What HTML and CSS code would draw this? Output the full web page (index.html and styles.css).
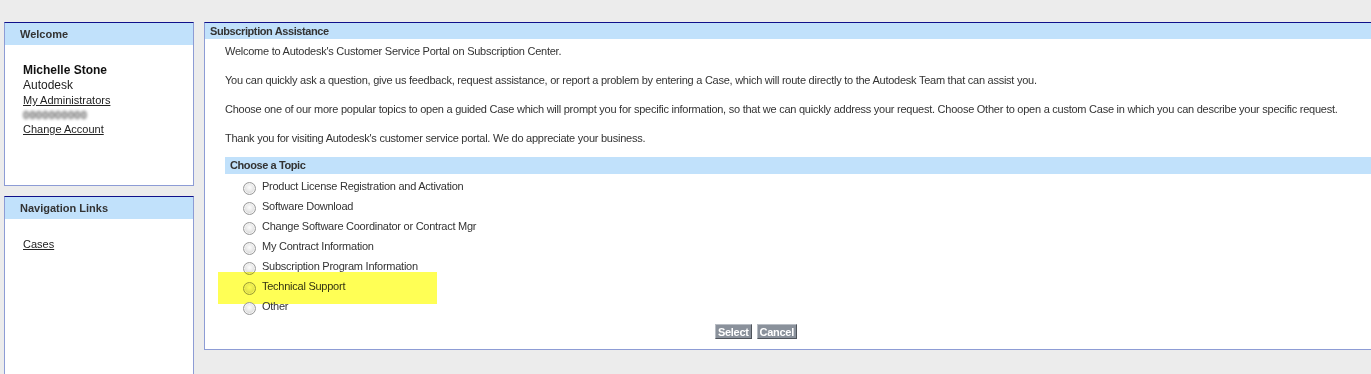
FILE: index.html
```html
<!DOCTYPE html>
<html lang="en">
<head>
    <meta charset="UTF-8">
    <meta name="viewport" content="width=device-width, initial-scale=1.0">
    <title>Subscription Center - Customer Service Portal</title>
    <link rel="stylesheet" href="styles.css">
</head>
<body>

    <div class="page">

        <!-- Columna izquierda -->
        <aside class="sidebar">
            <div class="box welcome-box">
                <div class="box-header">Welcome</div>
                <div class="box-body">
                    <div class="user-name">Michelle Stone</div>
                    <div class="user-company">Autodesk</div>
                    <a href="#" class="link">My Administrators</a>
                    <div class="blurred">0000000000</div>
                    <a href="#" class="link">Change Account</a>
                </div>
            </div>

            <div class="box nav-box">
                <div class="box-header">Navigation Links</div>
                <div class="box-body">
                    <a href="#" class="link">Cases</a>
                </div>
            </div>
        </aside>

        <!-- Panel principal -->
        <main class="panel">
            <div class="panel-header">Subscription Assistance</div>
            <div class="panel-body">
                <p>Welcome to Autodesk's Customer Service Portal on Subscription Center.</p>
                <p>You can quickly ask a question, give us feedback, request assistance, or report a problem by entering a Case, which will route directly to the Autodesk Team that can assist you.</p>
                <p>Choose one of our more popular topics to open a guided Case which will prompt you for specific information, so that we can quickly address your request. Choose Other to open a custom Case in which you can describe your specific request.</p>
                <p>Thank you for visiting Autodesk's customer service portal. We do appreciate your business.</p>

                <div class="section-bar">Choose a Topic</div>

                <form class="topics">
                    <label class="topic"><input type="radio" name="topic"><span class="radio"></span>Product License Registration and Activation</label>
                    <label class="topic"><input type="radio" name="topic"><span class="radio"></span>Software Download</label>
                    <label class="topic"><input type="radio" name="topic"><span class="radio"></span>Change Software Coordinator or Contract Mgr</label>
                    <label class="topic"><input type="radio" name="topic"><span class="radio"></span>My Contract Information</label>
                    <label class="topic"><input type="radio" name="topic"><span class="radio"></span>Subscription Program Information</label>
                    <label class="topic highlighted"><input type="radio" name="topic"><span class="radio"></span>Technical Support<span class="marker"></span></label>
                    <label class="topic"><input type="radio" name="topic"><span class="radio"></span>Other</label>

                    <div class="actions">
                        <button type="submit" class="btn">Select</button>
                        <button type="button" class="btn">Cancel</button>
                    </div>
                </form>
            </div>
        </main>

    </div>

</body>
</html>
```

FILE: styles.css
```css
:root {
    --fondo: #ececec;
    --azul-claro: #c1e1fb;
    --borde: #8d9cd5;
    --borde-oscuro: #10108a;
    --texto: #333;
}

body {
    font-family: "Liberation Sans", Arial, sans-serif;
    font-size: 11px;
    color: var(--texto);
    background-color: var(--fondo);
    margin: 0;
    padding: 0;
    overflow: hidden;
}

.page {
    display: flex;
    align-items: flex-start;
    gap: 10px;
    padding: 22px 0 0 4px;
}

/* Columna izquierda */
.sidebar {
    width: 190px;
    flex-shrink: 0;
    display: flex;
    flex-direction: column;
    gap: 10px;
}

.box {
    background-color: white;
    border: 1px solid var(--borde);
    border-top-color: var(--borde-oscuro);
}

.box-header {
    background-color: var(--azul-claro);
    height: 22px;
    line-height: 22px;
    padding-left: 15px;
    font-weight: bold;
    color: #333;
}

.box-body {
    padding: 18px 18px 0;
}

.welcome-box {
    height: 162px;
}

.nav-box {
    height: 200px;
}

.user-name {
    font-size: 12px;
    font-weight: bold;
    color: #111;
    line-height: 15px;
}

.user-company {
    font-size: 12px;
    line-height: 15px;
    color: #222;
}

.link {
    display: block;
    color: #222;
    text-decoration: underline;
    line-height: 15px;
}

.blurred {
    color: #555;
    font-weight: bold;
    line-height: 14px;
    letter-spacing: 0.3px;
    filter: blur(1.4px);
}

/* Panel principal */
.panel {
    flex: 1;
    background-color: white;
    border: 1px solid var(--borde);
    border-top-color: var(--borde-oscuro);
    border-right: none;
    letter-spacing: -0.25px;
}

.panel-header {
    background-color: var(--azul-claro);
    height: 16px;
    line-height: 16px;
    padding-left: 5px;
    font-weight: bold;
    color: #333;
    letter-spacing: -0.4px;
}

.panel-body {
    padding: 5px 0 10px 20px;
}

.panel-body p {
    margin: 0 0 15px;
    line-height: 14px;
    white-space: nowrap;
}

.panel-body p:last-of-type {
    margin-bottom: 12px;
}

.section-bar {
    background-color: var(--azul-claro);
    height: 17px;
    line-height: 17px;
    padding-left: 5px;
    font-weight: bold;
    color: #333;
    letter-spacing: -0.4px;
}

.topics {
    padding-top: 2px;
}

.topic {
    display: flex;
    align-items: center;
    height: 20px;
    padding-left: 18px;
    color: #333;
    position: relative;
    width: max-content;
}

.topic input {
    display: none;
}

.radio {
    width: 11px;
    height: 11px;
    border: 1px solid #9a9a9a;
    border-radius: 50%;
    background: radial-gradient(circle at 50% 40%, #fdfdfd 0%, #e8e8e8 45%, #c4c4c4 100%);
    margin: 5px 6px 0 0;
    box-shadow: inset 0 0 0 1px #f4f4f4;
}

/* Resaltado amarillo sobre Technical Support */
.marker {
    position: absolute;
    left: -7px;
    top: -4px;
    width: 219px;
    height: 32px;
    background-color: #ffff55;
    mix-blend-mode: multiply;
}

.actions {
    display: flex;
    gap: 5px;
    padding: 8px 0 0 490px;
}

.btn {
    font-family: "Liberation Sans", Arial, sans-serif;
    font-size: 11px;
    font-weight: bold;
    letter-spacing: -0.3px;
    color: white;
    background-color: #8a919b;
    border: 1px solid;
    border-color: #b8bdc4 #4e535a #4e535a #b8bdc4;
    padding: 0 2px;
    height: 15px;
    line-height: 12px;
    cursor: pointer;
}
```
